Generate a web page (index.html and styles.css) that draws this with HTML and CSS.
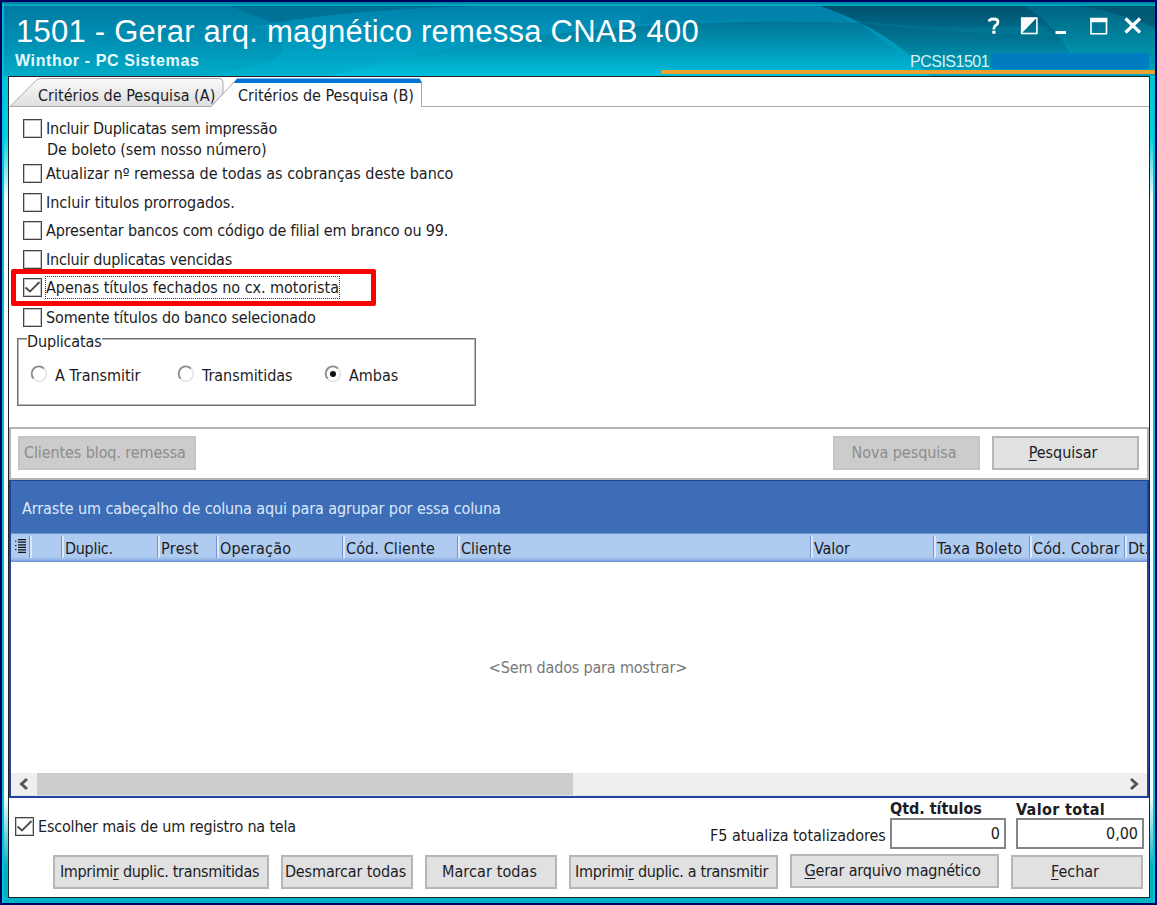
FILE: index.html
```html
<!DOCTYPE html>
<html lang="pt-BR">
<head>
<meta charset="utf-8">
<title>1501 - Gerar arq. magnético remessa CNAB 400</title>
<link rel="stylesheet" href="styles.css">
</head>
<body>
<div class="window">
  <header class="titlebar">
    <svg class="waves" width="1153" height="74" viewBox="2 2 1153 74" preserveAspectRatio="none">
      <defs>
        <linearGradient id="base" x1="0" y1="0" x2="0" y2="1"><stop offset="0" stop-color="#0079a1"/><stop offset=".55" stop-color="#0090b4"/><stop offset="1" stop-color="#00acc8"/></linearGradient>
        <linearGradient id="light" x1="0" y1="0" x2="0" y2="1"><stop offset="0" stop-color="#0086b3"/><stop offset="1" stop-color="#00b8d4"/></linearGradient>
        <linearGradient id="low" gradientUnits="userSpaceOnUse" x1="0" y1="22" x2="0" y2="76"><stop offset="0" stop-color="#007596"/><stop offset=".45" stop-color="#0094b4"/><stop offset="1" stop-color="#00c0dc"/></linearGradient>
        <linearGradient id="dark" x1="0" y1="0" x2="0" y2="1"><stop offset="0" stop-color="#00516e"/><stop offset=".5" stop-color="#007795"/><stop offset="1" stop-color="#00a8c2"/></linearGradient>
        <linearGradient id="edge" x1="0" y1="0" x2="0" y2="1"><stop offset="0" stop-color="#006583"/><stop offset="1" stop-color="#00a4bd"/></linearGradient>
      </defs>
      <rect x="2" y="2" width="1153" height="74" fill="url(#base)"/>
      <path d="M230 6H480Q340 10 275 24Q250 14 230 6Z" fill="#006688" opacity=".5"/>
      <path d="M255 26Q340 10 480 6H830Q880 24 930 76H200Q330 60 255 26Z" fill="url(#light)" opacity=".6"/>
      <path d="M640 14Q740 8 836 12L850 22Q740 18 640 24Z" fill="#0079a0" opacity=".35"/>
      <path d="M330 76Q470 36 660 25Q770 19 860 23L930 76Z" fill="url(#low)"/>
      <path d="M820 6H1025Q1055 24 1070 53L1090 76H932Q890 30 820 6Z" fill="url(#dark)"/>
      <path d="M840 18Q930 32 1045 25L1052 35Q950 34 870 24Z" fill="#0089a6" opacity=".3"/>
      <path d="M1025 6H1155V76H1085Q1065 32 1025 6Z" fill="url(#edge)"/>
      <path d="M1060 4H1155V28Q1110 8 1060 4Z" fill="#004e6b" opacity=".6"/>
      <path d="M2 3.500H1155" stroke="#0089a8" stroke-width="2"/>
      <path d="M2 5H1155" stroke="#00b4ca" stroke-width="1.500"/>
      <path d="M3 3V76" stroke="#00c3d6" stroke-width="1.500"/>
    </svg>
    <div class="heading">
      <h1>1501 - Gerar arq. magnético remessa CNAB 400</h1>
      <p>Winthor - PC Sistemas</p>
    </div>
    <div class="title-side">
      <svg class="controls" width="150" height="28" viewBox="0 0 150 28">
        <g fill="none" stroke="#fff">
          <path d="M3 8.500Q3.500 6 7.500 6Q12 6 12 9Q12 11 9.500 12.500Q7.800 13.500 7.800 16.500" stroke-width="2.800"/>
          <rect x="35.700" y="5.200" width="15.200" height="15.300" stroke-width="1.600"/>
          <path d="M69.500 19.500H80" stroke-width="3"/>
          <path d="M105 5.800V20.800H120.500V5.800" stroke-width="1.600"/>
          <path d="M104.200 7H121.300" stroke-width="4.500"/>
          <path d="M139.500 5.500L154 19.500M154 5.500L139.500 19.500" stroke-width="3.200"/>
        </g>
        <path d="M6.300 17.700h3.200v3h-3.200zM35 4.500h16L35 21z" fill="#fff"/>
      </svg>
      <div class="user"><span>PCSIS1501</span><i></i></div>
    </div>
    <div class="rule"></div>
  </header>

  <main class="panel">
    <nav class="tabs">
      <svg class="tab-shape" width="1140" height="31" viewBox="9 77 1140 31">
        <defs><linearGradient id="tab" x1="0" y1="0" x2="0" y2="1"><stop offset="0" stop-color="#fafafa"/><stop offset="1" stop-color="#dedede"/></linearGradient></defs>
        <path d="M10 106.500L36 80.500Q38 78.500 41 78.500H219Q223 78.500 223 82V94L211 106.500Z" fill="url(#tab)" stroke="#aaa"/>
        <path d="M211 107L237 79H421.500V106.500H1149V109H211Z" fill="#fff"/>
        <path d="M211 106.500L237 79M421.500 81V106.500H1149" fill="none" stroke="#a6a6a6"/>
        <path d="M237 78.500H420L421.500 83H234Z" fill="#0074d6"/>
      </svg>
      <span class="tab-a">Critérios de Pesquisa (A)</span>
      <span class="tab-b">Critérios de Pesquisa (B)</span>
    </nav>

    <section class="criteria">
      <label class="check"><i class="box"></i><span class="l1">Incluir Duplicatas sem impressão</span></label>
      <div class="note">De boleto (sem nosso número)</div>
      <label class="check g3"><i class="box"></i><span class="l2">Atualizar nº remessa de todas as cobranças deste banco</span></label>
      <label class="check g9"><i class="box"></i><span class="l3">Incluir titulos prorrogados.</span></label>
      <label class="check g8"><i class="box"></i><span class="l4">Apresentar bancos com código de filial em branco ou 99.</span></label>
      <label class="check g9"><i class="box"></i><span class="l5">Incluir duplicatas vencidas</span></label>
      <label class="check g8"><i class="box"><svg width="17" height="17" viewBox="0 0 17 17"><path d="M1.500 8.500L6 12.500L15.500 3"/></svg></i><span class="l6 focus">Apenas títulos fechados no cx. motorista</span><b class="highlight"></b></label>
      <label class="check g10"><i class="box"></i><span class="l7">Somente títulos do banco selecionado</span></label>
      <div class="group">
        <span class="legend">Duplicatas</span>
        <div class="radios">
          <label class="r1"><svg width="18" height="18" viewBox="0 0 18 18"><path class="hi" d="M14.200 3.800A7.200 7.200 0 0 1 3.800 14.200"/><path d="M14 3.600A7.200 7.200 0 0 0 3.700 13.700"/></svg>A Transmitir</label>
          <label class="r2"><svg width="18" height="18" viewBox="0 0 18 18"><path class="hi" d="M14.200 3.800A7.200 7.200 0 0 1 3.800 14.200"/><path d="M14 3.600A7.200 7.200 0 0 0 3.700 13.700"/></svg>Transmitidas</label>
          <label class="r3"><svg width="18" height="18" viewBox="0 0 18 18"><path class="hi" d="M14.200 3.800A7.200 7.200 0 0 1 3.800 14.200"/><path d="M14 3.600A7.200 7.200 0 0 0 3.700 13.700"/><circle cx="9" cy="9" r="3"/></svg>Ambas</label>
        </div>
      </div>
    </section>

    <section class="toolbar">
      <button class="btn off b-block">Clientes bloq. remessa</button>
      <button class="btn off b-new">Nova pesquisa</button>
      <button class="btn b-search"><u>P</u>esquisar</button>
    </section>

    <section class="grid">
      <div class="group-by"><span>Arraste um cabeçalho de coluna aqui para agrupar por essa coluna</span></div>
      <div class="cols">
        <div class="c0"><svg width="12" height="16" viewBox="0 0 12 16"><path d="M3 1.700H11M3 4.200H11M3 6.800H11M3 9.300H11M3 11.900H11M3 14.400H11" stroke="#111" stroke-width="1.300"/><path d="M0 3.200H1.500M0 7.500H1.500M0 11.700H1.500" stroke="#111"/></svg></div>
        <div class="c1"></div>
        <div class="c2">Duplic.</div>
        <div class="c3">Prest</div>
        <div class="c4">Operação</div>
        <div class="c5">Cód. Cliente</div>
        <div class="c6">Cliente</div>
        <div class="c7">Valor</div>
        <div class="c8">Taxa Boleto</div>
        <div class="c9">Cód. Cobrar</div>
        <div class="c10">Dt.</div>
      </div>
      <div class="empty"><span>&lt;Sem dados para mostrar&gt;</span></div>
      <div class="scroll">
        <svg width="26" height="22" viewBox="0 0 26 22"><path d="M16 6L10.500 11L16 16"/></svg>
        <i class="thumb"></i>
        <svg class="right" width="26" height="22" viewBox="0 0 26 22"><path d="M10 6L15.500 11L10 16"/></svg>
      </div>
    </section>

    <footer class="footer">
      <div class="totals">
        <label class="check multi"><i class="box"><svg width="17" height="17" viewBox="0 0 17 17"><path d="M1.500 8.500L6 12.500L15.500 3"/></svg></i><span class="l8">Escolher mais de um registro na tela</span></label>
        <span class="hint">F5 atualiza totalizadores</span>
        <div class="field qty"><b>Qtd. títulos</b><output>0</output></div>
        <div class="field sum"><b>Valor total</b><output>0,00</output></div>
      </div>
      <div class="actions">
        <button class="btn a1">Imprimi<u>r</u> duplic. transmitidas</button>
        <button class="btn a2">Desmarcar todas</button>
        <button class="btn a3">Marcar todas</button>
        <button class="btn a4">Imprimi<u>r</u> duplic. a transmitir</button>
        <button class="btn a5"><u>G</u>erar arquivo magnético</button>
        <button class="btn a6"><u>F</u>echar</button>
      </div>
    </footer>
  </main>
</div>
</body>
</html>
```
FILE: styles.css
```css
* { box-sizing: border-box; }
body { margin: 0; overflow: hidden; }
.window {
  width: 1157px; height: 905px; border: 2px solid #000060;
  display: flex; flex-direction: column;
  font: 16px/20px "DejaVu Sans Condensed", "DejaVu Sans", sans-serif;
  font-stretch: condensed; letter-spacing: -0.03px; color: #1c1c24;
  background: linear-gradient(90deg, #00c3d6 0 2px, transparent 2px 1151px, #00c3d6 1151px),
    linear-gradient(180deg, #00b6cc 0, #00d2e4 15%, #fff 22%, #fff 88%, #00b2c6 96%);
}
.titlebar { position: relative; height: 74px; display: flex; justify-content: space-between; font-family: "Liberation Sans", sans-serif; color: #fff; letter-spacing: 0; }
.waves { position: absolute; left: 0; top: 0; }
.heading, .title-side { position: relative; }
.heading { padding: 12px 0 0 14px; }
h1 { margin: 0; font-weight: 400; font-size: 31px; line-height: 36px; letter-spacing: 0.25px; white-space: nowrap; }
.heading p { margin: 2px 0 0 -1px; font: bold 16px/18px "Liberation Sans", sans-serif; letter-spacing: .62px; color: #e8fbff; }
.title-side { width: 245px; padding-top: 11px; }
.controls { display: block; margin-left: 76px; overflow: visible; }
.user { display: flex; margin-top: 11px; height: 18px; font-size: 16px; line-height: 19px; letter-spacing: -.5px; color: #d8f4fa; }
.user span { width: 81px; }
.user i { width: 158px; height: 16px; margin-top: 1px; background: #007dc0; border-radius: 3px; }
.rule { position: absolute; left: 659px; right: 0; top: 67.500px; height: 4px; background: #eca12c; }

.panel { width: 1142px; height: 822px; margin-left: 6px; border: 1px solid #222; background: #fff; display: flex; flex-direction: column; }
.tabs { position: relative; height: 31px; display: flex; padding: 9px 0 0 29px; flex: none; }
.tab-shape { position: absolute; left: 0; top: 0; }
.tabs span { position: relative; }
.tab-a { width: 200px; letter-spacing: .03px; }

.criteria { height: 319px; padding: 10px 0 0 14px; flex: none; }
.check { display: flex; align-items: center; height: 20px; position: relative; white-space: nowrap; }
.check span { line-height: 20px; padding-top: 1px; }
.box { width: 19px; height: 19px; border: 1.5px solid #444; background: #fff; flex: none; margin-right: 4px; outline: 1px solid #c4c4c4; outline-offset: -2px; }
.box svg { display: block; fill: none; stroke: #4c4c4c; stroke-width: 1.800; }
.note { height: 22px; padding: 2px 0 0 24px; letter-spacing: -.1px; }
.g3 { margin-top: 3px; } .g8 { margin-top: 8px; } .g9 { margin-top: 9px; } .g10 { margin-top: 10px; }
.l1 { letter-spacing: -.24px; } .l4 { letter-spacing: -.17px; } .l5 { letter-spacing: -.2px; }
.l7 { letter-spacing: -.15px; } .l8 { letter-spacing: -.18px; }
.focus { outline: 1px dotted #333; outline-offset: 0; }
.highlight { position: absolute; left: -12px; top: -8px; width: 365px; height: 37px; border: 5px solid #fe0000; border-radius: 2px; }
.group { position: relative; width: 459px; height: 68px; margin: 11px 0 0 -6px; border: 1.5px solid #707070; outline: 1px solid #b8b8b8; outline-offset: -2px; padding-top: 27px; }
.legend { position: absolute; left: 9px; top: -7px; z-index: 1; background: #fff; line-height: 20px; height: 20px; letter-spacing: -.15px; }
.radios { display: flex; padding-left: 12px; }
.radios label { display: flex; align-items: center; gap: 7px; }
.radios svg { fill: none; stroke: #8a8a8a; stroke-width: 1.800; margin-top: -4px; }
.radios .hi { stroke: #e6e6e6; }
.radios circle { fill: #111; stroke: none; }
.r1, .r2 { width: 147px; }

.toolbar { height: 53px; flex: none; border: 2px solid #b4b4b4; display: flex; padding: 7px 8px 0 7px; }
.btn { font: inherit; letter-spacing: inherit; color: #1c1c24; height: 34px; padding: 0; border: 2px solid #b6b6b6; background: #e1e1e1; white-space: nowrap; flex: none; }
.btn u { text-underline-offset: 2px; }
.off { background: #ccc; border-color: #c4c4c4; color: #8c8c8c; }
.b-block { width: 178px; text-align: left; padding-left: 4px; margin-right: auto; letter-spacing: -.1px; }
.b-new { width: 147px; margin-right: 12px; padding-right: 5px; }
.b-search { width: 147px; padding-right: 5px; }

.grid { height: 318px; flex: none; border: solid #20449e; border-width: 1.500px 2px 2px; display: flex; flex-direction: column; overflow: hidden; }
.group-by { height: 52px; padding: 18px 0 0 11px; background: #3e6db8; color: #dbe8fb; flex: none; letter-spacing: -.1px; }
.cols { display: flex; height: 29px; flex: none; padding-top: 3px; background: linear-gradient(180deg, #6e96d6 0 1px, #afcbf0 1px 24px, #8fb0e4 27px, #7599d4 28px); }
.cols div { height: 22px; flex: none; border-left: 1px solid #7296d4; box-shadow: inset 2px 0 #dbe8fb; padding: 3px 0 0 3px; overflow: hidden; white-space: nowrap; }
.cols .c0 { width: 18px; border: 0; box-shadow: none; padding: 2px 0 0 4px; }
.c1 { width: 32px; } .c2 { width: 96px; letter-spacing: -.3px; } .c3 { width: 59px; letter-spacing: .35px; } .c4 { width: 126px; letter-spacing: .2px; } .c5 { width: 115px; letter-spacing: .1px; }
.c6 { width: 353px; } .c7 { width: 123px; } .c8 { width: 96px; letter-spacing: .22px; } .c9 { width: 95px; letter-spacing: .1px; } .c10 { width: 24px; }
.empty { flex: 1; display: flex; justify-content: center; padding: 96px 0 0 18px; color: #777; letter-spacing: -.18px; }
.scroll { height: 23px; display: flex; flex: none; background: #efefef; border-bottom: 1px solid #e2e4ee; }
.scroll svg { fill: none; stroke: #555; stroke-width: 3; }
.scroll .right { margin-left: auto; }
.thumb { width: 536px; background: #cdcdcd; }

.footer { padding-left: 6px; }
.totals { display: flex; height: 52px; }
.multi { margin-top: 18px; width: 695px; }
.hint { width: 180px; margin-top: 28px; white-space: nowrap; }
.field b { display: block; height: 20px; line-height: 21px; white-space: nowrap; }
.field output { display: block; height: 31px; border: 2px solid #858585; text-align: right; padding: 4px 4px 0 0; }
.qty { width: 116px; margin-right: 10px; }
.sum { width: 128px; } .sum b { letter-spacing: .35px; line-height: 24px; }
.actions { display: flex; padding: 5px 0 0 38px; }
.a1 { width: 216px; margin-right: 12px; letter-spacing: -.32px; padding-right: 3px; } .a2 { width: 132px; margin-right: 12px; letter-spacing: -.12px; padding-right: 3px; } .a3 { width: 132px; margin-right: 12px; padding-right: 3px; letter-spacing: .1px; }
.a4 { width: 209px; margin-right: 12px; letter-spacing: -.32px; padding-right: 4px; } .a5 { width: 209px; margin: -1px 12px 0 0; letter-spacing: -.18px; padding-right: 4px; } .a6 { width: 132px; padding-right: 4px; }
```
